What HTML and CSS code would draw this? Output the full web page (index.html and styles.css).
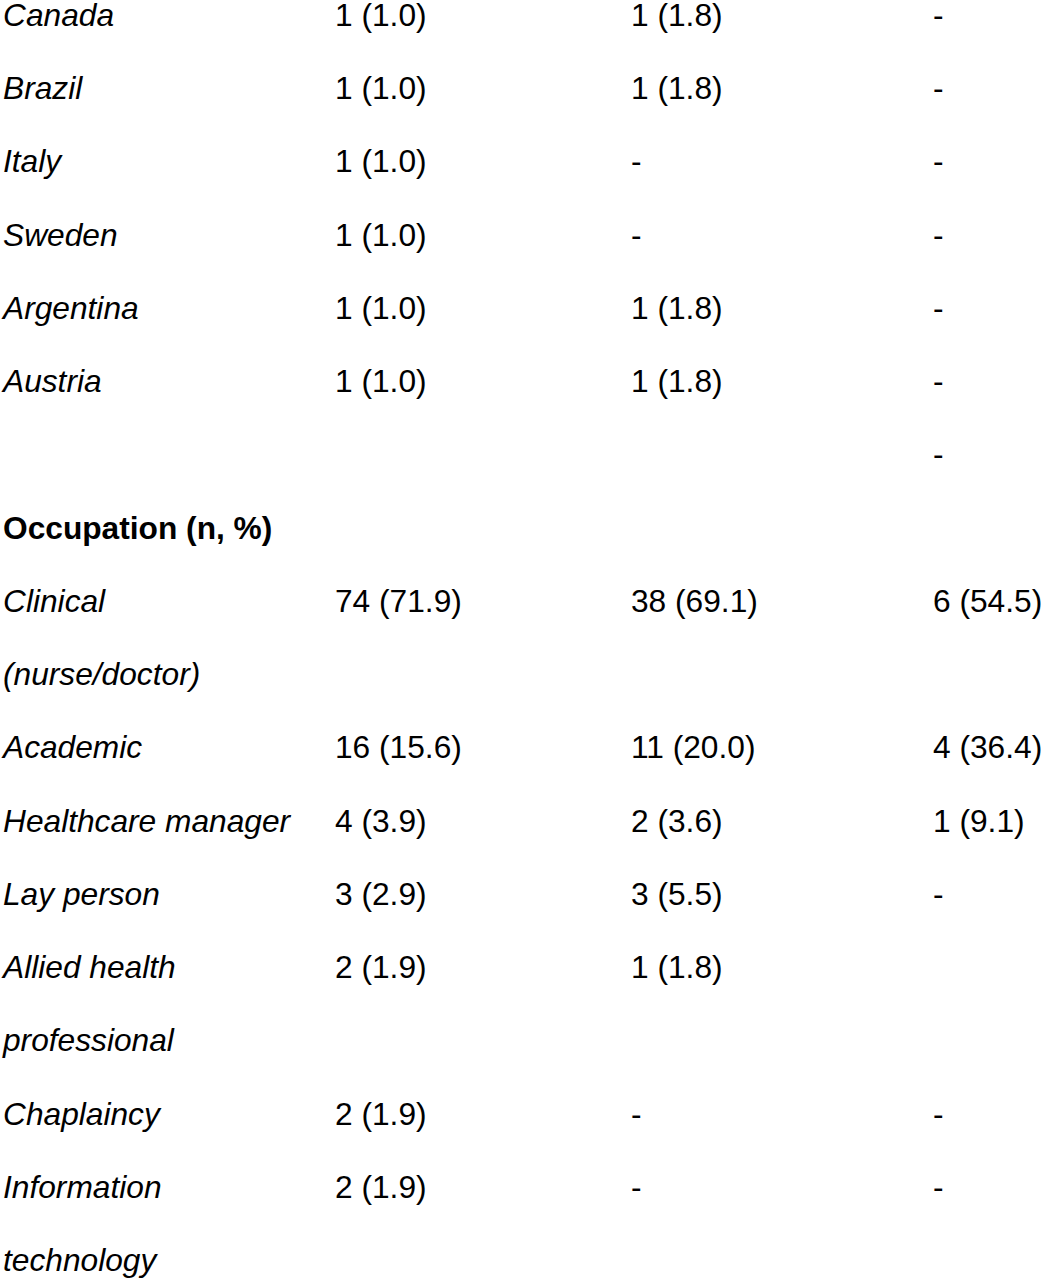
FILE: index.html
```html
<!DOCTYPE html>
<html>
<head>
<meta charset="utf-8">
<link rel="stylesheet" href="styles.css">
</head>
<body>
<div class="table">
  <div class="row"><span class="label">Canada</span><span>1 (1.0)</span><span>1 (1.8)</span><span>-</span></div>
  <div class="row"><span class="label">Brazil</span><span>1 (1.0)</span><span>1 (1.8)</span><span>-</span></div>
  <div class="row"><span class="label">Italy</span><span>1 (1.0)</span><span>-</span><span>-</span></div>
  <div class="row"><span class="label">Sweden</span><span>1 (1.0)</span><span>-</span><span>-</span></div>
  <div class="row"><span class="label">Argentina</span><span>1 (1.0)</span><span>1 (1.8)</span><span>-</span></div>
  <div class="row"><span class="label">Austria</span><span>1 (1.0)</span><span>1 (1.8)</span><span>-</span></div>
  <div class="row"><span class="label"></span><span></span><span></span><span>-</span></div>
  <div class="row"><span class="heading">Occupation (n, %)</span><span></span><span></span><span></span></div>
  <div class="row"><span class="label">Clinical</span><span>74 (71.9)</span><span>38 (69.1)</span><span>6 (54.5)</span></div>
  <div class="row"><span class="label">(nurse/doctor)</span><span></span><span></span><span></span></div>
  <div class="row"><span class="label">Academic</span><span>16 (15.6)</span><span>11 (20.0)</span><span>4 (36.4)</span></div>
  <div class="row"><span class="label">Healthcare manager</span><span>4 (3.9)</span><span>2 (3.6)</span><span>1 (9.1)</span></div>
  <div class="row"><span class="label">Lay person</span><span>3 (2.9)</span><span>3 (5.5)</span><span>-</span></div>
  <div class="row"><span class="label">Allied health</span><span>2 (1.9)</span><span>1 (1.8)</span><span></span></div>
  <div class="row"><span class="label">professional</span><span></span><span></span><span></span></div>
  <div class="row"><span class="label">Chaplaincy</span><span>2 (1.9)</span><span>-</span><span>-</span></div>
  <div class="row"><span class="label">Information</span><span>2 (1.9)</span><span>-</span><span>-</span></div>
  <div class="row"><span class="label">technology</span><span></span><span></span><span></span></div>
</div>
</body>
</html>
```
FILE: styles.css
```css
html, body {
  margin: 0;
  padding: 0;
  background: #ffffff;
}
body {
  font-family: "Liberation Sans", Arial, sans-serif;
  font-size: 31.7px;
  color: #000000;
  overflow: hidden;
}
.table {
  margin-top: -21px;
  padding-left: 3px;
}
.row {
  display: grid;
  grid-template-columns: 332px 296px 302px 1fr;
  height: 73.24px;
  line-height: 73.24px;
  white-space: nowrap;
}
.label {
  font-style: italic;
}
.heading {
  font-weight: bold;
}
```
